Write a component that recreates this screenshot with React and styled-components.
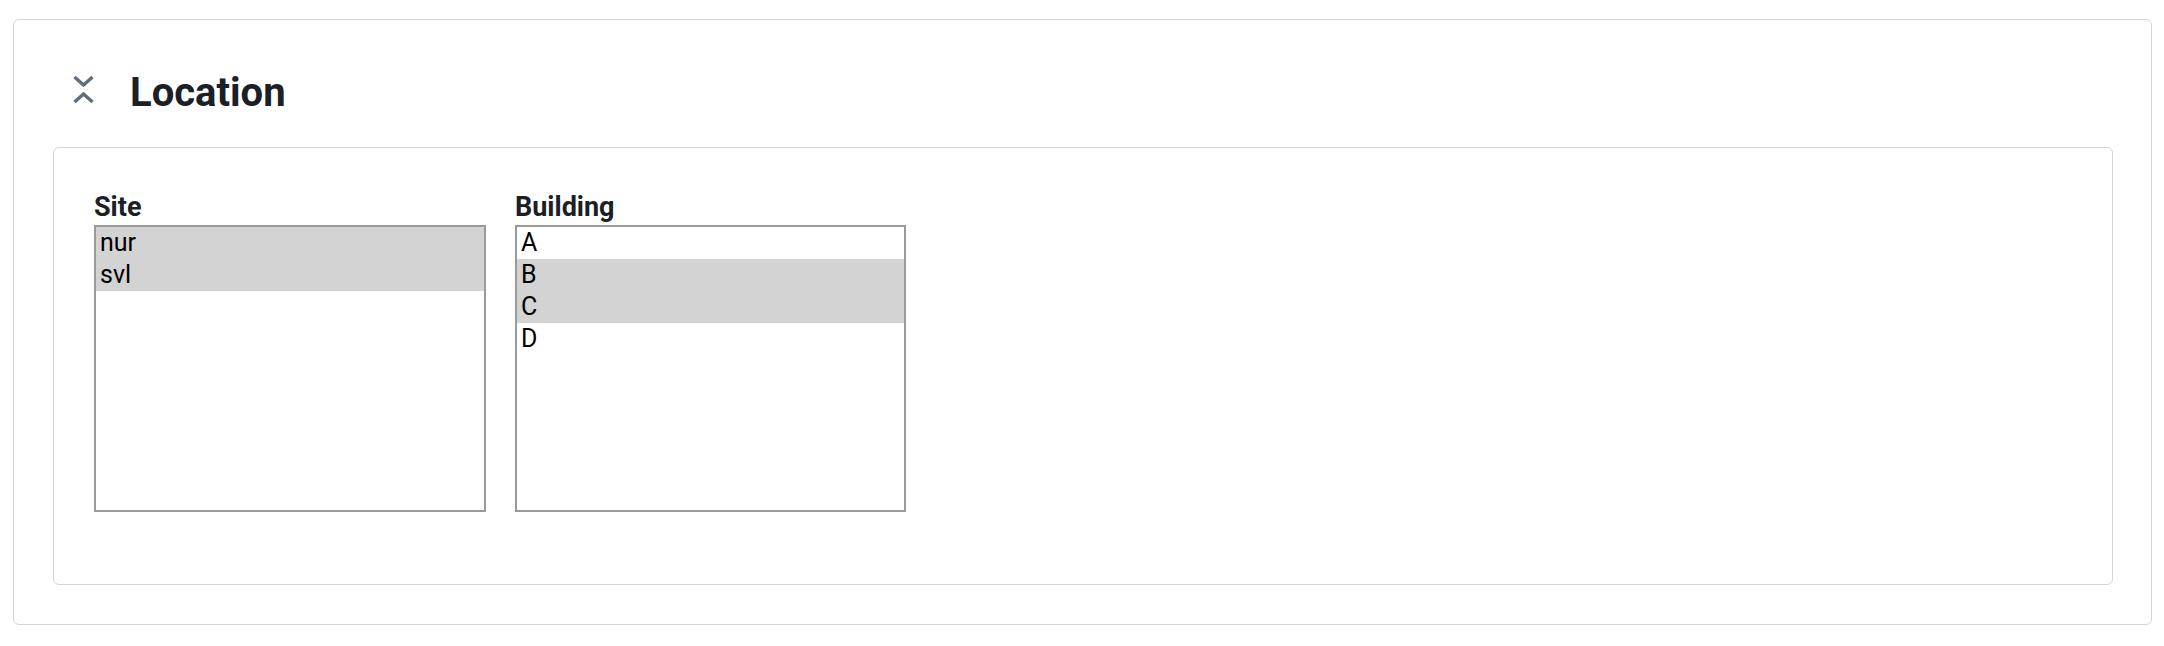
import styled, { createGlobalStyle } from 'styled-components'

const GlobalStyle = createGlobalStyle`
  body {
    margin: 0;
    background: #ffffff;
    font-family: Roboto, "Liberation Sans", sans-serif;
  }
`

const Card = styled.section`
  margin: 19px 12px 20px 13px;
  border: 1px solid #d5d5d5;
  border-radius: 6px;
  padding: 49px 38px 39px 39px;
`

const Header = styled.div`
  display: flex;
  align-items: center;
  gap: 36px;
  padding-left: 20px;
  margin-bottom: 31px;
`

const Toggle = styled.svg`
  display: block;
  margin-bottom: 6px;
  color: #5e6e7c;
`

const Title = styled.h2`
  margin: 0;
  font-size: 40px;
  font-weight: 700;
  color: #1b2026;
`

const Panel = styled.div`
  display: flex;
  gap: 29px;
  border: 1px solid #d5d5d5;
  border-radius: 6px;
  padding: 43px 40px 72px;
`

const Field = styled.div`
  display: flex;
  flex-direction: column;
`

const Label = styled.label`
  font-size: 27px;
  font-weight: 700;
  color: #1b2026;
  margin-bottom: 2px;
`

const ListBox = styled.div`
  box-sizing: border-box;
  width: ${p => p.$width}px;
  height: 287px;
  border: 2px solid #9a9a9a;
  overflow: hidden;
`

const Option = styled.div`
  font-size: 25px;
  line-height: 32px;
  padding: 0 4px;
  color: #000;
  background: ${p => (p.$selected ? '#d3d3d3' : 'transparent')};
`

const fields = [
  {
    label: 'Site',
    width: 392,
    options: [
      { value: 'nur', selected: true },
      { value: 'svl', selected: true },
    ],
  },
  {
    label: 'Building',
    width: 391,
    options: [
      { value: 'A', selected: false },
      { value: 'B', selected: true },
      { value: 'C', selected: true },
      { value: 'D', selected: false },
    ],
  },
]

function CollapseIcon() {
  return (
    <Toggle width="21" height="29" viewBox="0 0 21 29" fill="none">
      <path d="M1.5 2 L10.5 10 L19.5 2" stroke="currentColor" strokeWidth="3.4" />
      <path d="M1.5 27 L10.5 19 L19.5 27" stroke="currentColor" strokeWidth="3.4" />
    </Toggle>
  )
}

export default function App() {
  return (
    <>
      <GlobalStyle />
      <Card>
        <Header>
          <CollapseIcon />
          <Title>Location</Title>
        </Header>
        <Panel>
          {fields.map(field => (
            <Field key={field.label}>
              <Label>{field.label}</Label>
              <ListBox $width={field.width}>
                {field.options.map(opt => (
                  <Option key={opt.value} $selected={opt.selected}>
                    {opt.value}
                  </Option>
                ))}
              </ListBox>
            </Field>
          ))}
        </Panel>
      </Card>
    </>
  )
}
